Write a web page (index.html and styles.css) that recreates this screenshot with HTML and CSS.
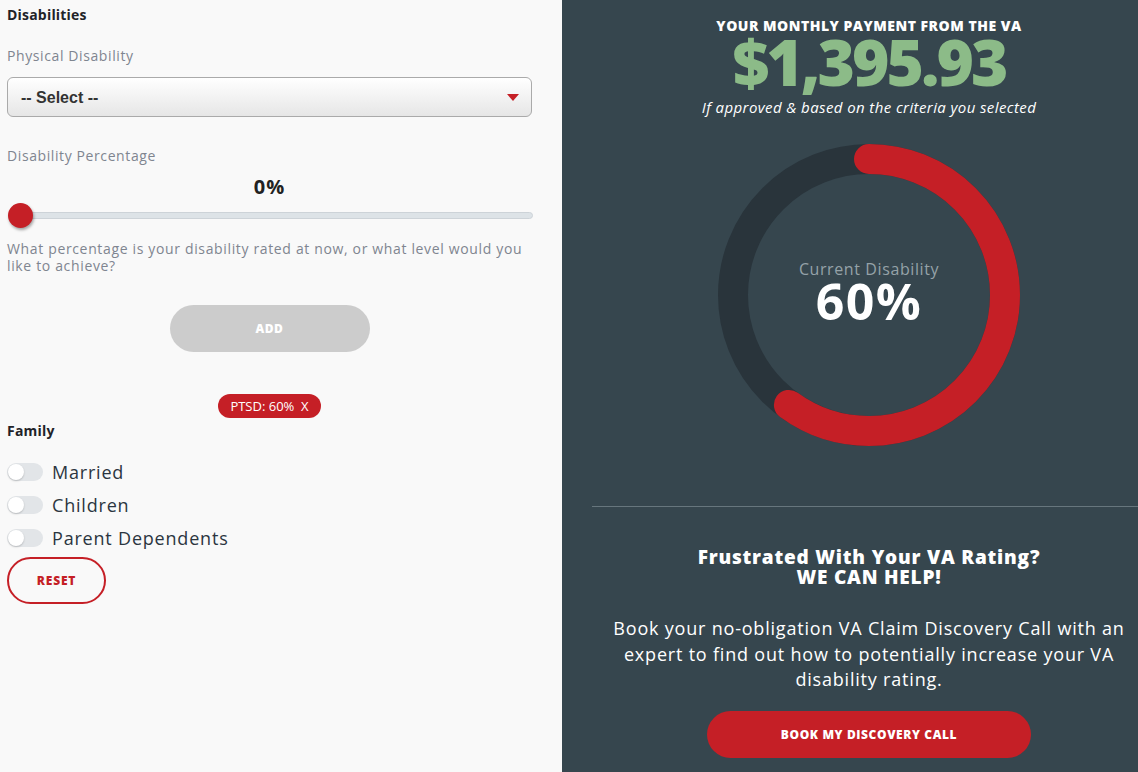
FILE: index.html
```html
<!DOCTYPE html>
<html lang="en">
<head>
<meta charset="utf-8">
<title>VA Disability Calculator</title>
<link rel="stylesheet" href="styles.css">
</head>
<body>
<div class="calc">
  <section class="form">
    <h3 class="section-title">Disabilities</h3>
    <div class="field-label first">Physical Disability</div>
    <div class="select">
      <span>-- Select --</span>
      <svg class="caret" width="12" height="7" viewBox="0 0 12 7"><path d="M0 0H12L6 7Z" fill="#c51f26"/></svg>
    </div>

    <div class="field-label pct-label">Disability Percentage</div>
    <div class="pct-value">0%</div>
    <div class="slider">
      <div class="track"></div>
      <div class="thumb"></div>
    </div>
    <p class="help">What percentage is your disability rated at now, or what level would you like to achieve?</p>

    <div class="add-row"><button class="btn-add">ADD</button></div>
    <div class="tag-row"><span class="tag">PTSD: 60% &nbsp;X</span></div>

    <h3 class="section-title family">Family</h3>
    <ul class="toggles">
      <li><span class="switch"><span class="knob"></span></span>Married</li>
      <li><span class="switch"><span class="knob"></span></span>Children</li>
      <li><span class="switch"><span class="knob"></span></span>Parent Dependents</li>
    </ul>
    <button class="btn-reset">RESET</button>
  </section>

  <section class="result">
    <div class="result-inner">
      <div class="pay-title">YOUR MONTHLY PAYMENT FROM THE VA</div>
      <div class="amount">$1,395.93</div>
      <div class="pay-note">If approved &amp; based on the criteria you selected</div>

      <div class="donut">
        <svg width="302" height="302" viewBox="0 0 302 302">
          <circle cx="151" cy="151" r="136" fill="none" stroke="#29343b" stroke-width="30"/>
          <circle cx="151" cy="151" r="136" fill="none" stroke="#c51f26" stroke-width="30"
                  stroke-linecap="round" stroke-dasharray="512.7 1000"
                  transform="rotate(-90 151 151)"/>
        </svg>
        <div class="donut-text">
          <div class="donut-label">Current Disability</div>
          <div class="donut-value">60%</div>
        </div>
      </div>
    </div>

    <hr class="divider">

    <div class="result-inner cta">
      <h2 class="cta-title">Frustrated With Your VA Rating?<br>WE CAN HELP!</h2>
      <p class="cta-text">Book your no-obligation VA Claim Discovery Call with an expert to find out how to potentially increase your VA disability rating.</p>
      <button class="btn-book">BOOK MY DISCOVERY CALL</button>
    </div>
  </section>
</div>
</body>
</html>
```

FILE: styles.css
```css
* { box-sizing: border-box; }

html, body {
  margin: 0;
  padding: 0;
}

body {
  font-family: "Open Sans", "Liberation Sans", sans-serif;
  color: #2b3540;
}

.calc {
  display: grid;
  grid-template-columns: 562px 1fr;
  height: 772px;
  overflow: hidden;
}

/* ---------- form column ---------- */
.form {
  background: #f9f9f9;
  padding: 5px 30px 0 7px;
}

.section-title {
  margin: 0;
  font-size: 14px;
  line-height: 20px;
  font-weight: 700;
  color: #1f2328;
  letter-spacing: 0.2px;
}

.field-label {
  font-size: 14px;
  line-height: 20px;
  color: #7f8590;
  letter-spacing: 0.6px;
}
.field-label.first { margin-top: 21px; }

.select {
  margin-top: 11px;
  height: 40px;
  border: 1px solid #aaaaaa;
  border-radius: 6px;
  background: linear-gradient(#ffffff, #e6e6e6);
  display: flex;
  align-items: center;
  justify-content: space-between;
  padding: 0 12px 0 13px;
  font-family: "Liberation Sans", Arial, sans-serif;
  font-size: 16px;
  font-weight: 700;
  color: #333333;
}
.select span { margin-top: 1px; }
.caret { margin-top: 1px; }

.pct-label { margin-top: 29px; }

.pct-value {
  margin-top: 9px;
  text-align: center;
  font-size: 20px;
  line-height: 24px;
  font-weight: 700;
  color: #222222;
  letter-spacing: 1px;
}

.slider {
  position: relative;
  height: 24px;
  margin-top: 4px;
}
.track {
  position: absolute;
  left: 1px;
  right: -1px;
  top: 9px;
  height: 7px;
  border-radius: 4px;
  background: #dde3e7;
  border: 1px solid #cdd3d8;
}
.thumb {
  position: absolute;
  left: 1px;
  top: 0;
  width: 25px;
  height: 25px;
  border-radius: 50%;
  background: #c51f26;
  box-shadow: 1px 2px 3px rgba(0, 0, 0, 0.35);
}

.help {
  margin: 13px 0 0;
  font-size: 14px;
  line-height: 17px;
  color: #7f8590;
  letter-spacing: 0.65px;
}

.add-row {
  display: flex;
  justify-content: center;
  margin-top: 31px;
}
.btn-add {
  width: 200px;
  height: 47px;
  border: 0;
  border-radius: 24px;
  background: #cccccc;
  color: #ffffff;
  font-family: inherit;
  font-size: 12px;
  font-weight: 800;
  letter-spacing: 0.5px;
}

.tag-row {
  display: flex;
  justify-content: center;
  margin-top: 42px;
}
.tag {
  display: inline-block;
  height: 24px;
  line-height: 24px;
  padding: 0 12px;
  border-radius: 12px;
  background: #c51f26;
  color: #ffffff;
  font-size: 13px;
}

.family { margin-top: 3px; }

.toggles {
  list-style: none;
  margin: 14px 0 0;
  padding: 0;
}
.toggles li {
  display: flex;
  align-items: center;
  height: 33px;
  font-size: 18px;
  color: #2b3540;
  letter-spacing: 0.8px;
}
.switch {
  position: relative;
  width: 36px;
  height: 18px;
  border-radius: 9px;
  background: #e2e5e8;
  margin-right: 9px;
  flex: none;
}
.knob {
  position: absolute;
  left: 1px;
  top: 1px;
  width: 16px;
  height: 16px;
  border-radius: 50%;
  background: #ffffff;
  box-shadow: 0 1px 2px rgba(0, 0, 0, 0.2);
}

.btn-reset {
  margin-top: 3px;
  width: 99px;
  height: 47px;
  border: 2px solid #c51f26;
  border-radius: 24px;
  background: transparent;
  color: #c51f26;
  font-family: inherit;
  font-size: 12px;
  font-weight: 800;
  letter-spacing: 0.8px;
}

/* ---------- result column ---------- */
.result {
  background: #36464e;
  color: #ffffff;
  padding-left: 30px;
}

.result-inner {
  padding-left: 8px;
  text-align: center;
}

.pay-title {
  padding-top: 18px;
  font-size: 14px;
  line-height: 16px;
  font-weight: 800;
  letter-spacing: 0.5px;
}

.amount {
  font-size: 64px;
  line-height: 56px;
  height: 56px;
  font-weight: 800;
  color: #8cbb88;
  letter-spacing: -3px;
}

.pay-note {
  margin-top: 7px;
  font-size: 15px;
  line-height: 20px;
  font-style: italic;
  letter-spacing: 0.4px;
}

.donut {
  position: relative;
  width: 302px;
  height: 302px;
  margin: 27px auto 0;
}
.donut svg { display: block; }
.donut-text {
  position: absolute;
  inset: 0;
  display: flex;
  flex-direction: column;
  align-items: center;
  justify-content: center;
  padding-bottom: 8px;
}
.donut-label {
  font-size: 16px;
  line-height: 20px;
  color: #95a2a8;
  letter-spacing: 0.6px;
}
.donut-value {
  font-size: 50px;
  line-height: 44px;
  font-weight: 700;
  letter-spacing: 1.5px;
}

.divider {
  margin: 60px 0 0;
  border: 0;
  border-top: 1px solid #67767d;
}

.cta-title {
  margin: 40px 0 0;
  font-size: 19px;
  line-height: 20px;
  font-weight: 800;
  letter-spacing: 0.8px;
}

.cta-text {
  margin: 29px 0 0;
  padding: 0 8px;
  font-size: 18px;
  line-height: 25.5px;
  letter-spacing: 0.8px;
}

.btn-book {
  margin-top: 18px;
  width: 324px;
  height: 47px;
  border: 0;
  border-radius: 24px;
  background: #c51f26;
  color: #ffffff;
  font-family: inherit;
  font-size: 12px;
  font-weight: 800;
  letter-spacing: 0.6px;
}
```
